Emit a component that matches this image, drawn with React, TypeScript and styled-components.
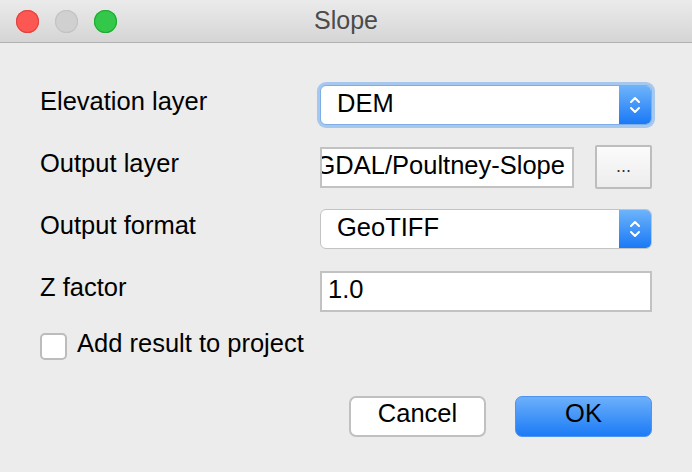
import React from "react";
import styled, { createGlobalStyle, css } from "styled-components";

const GlobalStyle = createGlobalStyle`
    html, body {
        margin: 0;
        padding: 0;
        background: #ececec;
    }
    body {
        font-family: "Liberation Sans", Arial, sans-serif;
        color: #000;
    }
`;

const Window = styled.div`
    width: 692px;
    height: 472px;
    background: #ececec;
    display: flex;
    flex-direction: column;
    overflow: hidden;
`;

const TitleBar = styled.div`
    height: 42px;
    flex: none;
    position: relative;
    display: flex;
    align-items: center;
    justify-content: center;
    background: linear-gradient(#ebebeb, #d5d5d5);
    border-bottom: 1px solid #b1b1b1;
`;

const Lights = styled.div`
    position: absolute;
    left: 16px;
    top: 10px;
    display: flex;
    gap: 16px;
`;

const Light = styled.span<{ $color: string; $edge: string }>`
    width: 23px;
    height: 23px;
    border-radius: 50%;
    background: ${({ $color }) => $color};
    box-shadow: inset 0 0 0 1px ${({ $edge }) => $edge};
`;

const Title = styled.div`
    font-size: 25px;
    color: #4b4b4b;
    padding-bottom: 2px;
`;

const Body = styled.div`
    padding: 31px 40px 0 40px;
    display: flex;
    flex-direction: column;
`;

const FormGrid = styled.div`
    display: grid;
    grid-template-columns: 280px 332px;
    grid-auto-rows: 62px;
    align-items: center;
`;

const Label = styled.div`
    font-size: 25.5px;
    padding-bottom: 7px;
`;

const Row = styled.div`
    display: flex;
    align-items: center;
    gap: 21px;
`;

const fieldBox = css`
    box-sizing: border-box;
    height: 41px;
    background: #fff;
    font-size: 25.5px;
    display: flex;
    align-items: center;
    overflow: hidden;
    white-space: nowrap;
`;

const FieldText = styled.span`
    padding-bottom: 3px;
`;

const SelectBox = styled.div<{ $focused?: boolean }>`
    ${fieldBox};
    height: 40px;
    width: 332px;
    border: 1px solid #c3c3c3;
    border-radius: 6px;
    padding-left: 16px;
    justify-content: space-between;
    ${({ $focused }) =>
        $focused &&
        css`
            border-color: #7eaee6;
            box-shadow: 0 0 0 3px #a6c8ef;
        `}
`;

const Stepper = styled.div`
    width: 32px;
    align-self: stretch;
    background: linear-gradient(#6db3fa, #1a79f6);
    display: flex;
    align-items: center;
    justify-content: center;
`;

const TextField = styled.div<{ $clip?: boolean }>`
    ${fieldBox};
    border: 2px solid #c2c2c2;
    padding: 0 6px;
    flex: 1;
    ${({ $clip }) =>
        $clip &&
        css`
            justify-content: flex-end;
            padding: 0 7px 0 0;
        `}
`;

const BrowseButton = styled.div`
    box-sizing: border-box;
    width: 57px;
    height: 44px;
    flex: none;
    border: 2px solid #bdbdbd;
    border-radius: 2px;
    background: linear-gradient(#fbfbfb, #ededed);
    display: flex;
    align-items: center;
    justify-content: center;
    font-size: 18px;
    color: #333;
    padding-bottom: 2px;
`;

const CheckRow = styled.label`
    height: 43px;
    display: flex;
    align-items: center;
    gap: 10px;
    font-size: 25.5px;
    padding-bottom: 4px;
`;

const CheckBox = styled.span`
    box-sizing: border-box;
    width: 27px;
    height: 27px;
    border: 2px solid #bcbcbc;
    border-radius: 5px;
    background: #fff;
    margin-top: 6px;
`;

const Buttons = styled.div`
    display: flex;
    justify-content: flex-end;
    gap: 29px;
    margin-top: 27px;
`;

const Button = styled.div<{ $primary?: boolean }>`
    box-sizing: border-box;
    width: 137px;
    height: 41px;
    border-radius: 7px;
    font-size: 25.5px;
    display: flex;
    align-items: center;
    justify-content: center;
    padding-bottom: 6px;
    ${({ $primary }) =>
        $primary
            ? css`
                  background: linear-gradient(#6cb0fb, #1c7bf6);
                  border: 1px solid #4d93f0;
              `
            : css`
                  background: #fff;
                  border: 2px solid #c0c0c0;
              `}
`;

const Chevrons = () => (
    <svg width="14" height="24" viewBox="0 0 14 24" fill="none" stroke="#fff" strokeWidth="2" strokeLinecap="round" strokeLinejoin="round">
        <path d="M3 9 L7 5 L11 9" />
        <path d="M3 15 L7 19 L11 15" />
    </svg>
);

export default function App() {
    return (
        <Window>
            <GlobalStyle />
            <TitleBar>
                <Lights>
                    <Light $color="#fc5753" $edge="#e0443e" />
                    <Light $color="#d0d0d0" $edge="#c2c2c2" />
                    <Light $color="#34c84a" $edge="#22a834" />
                </Lights>
                <Title>Slope</Title>
            </TitleBar>
            <Body>
                <FormGrid>
                    <Label>Elevation layer</Label>
                    <SelectBox $focused>
                        <FieldText>DEM</FieldText>
                        <Stepper><Chevrons /></Stepper>
                    </SelectBox>

                    <Label>Output layer</Label>
                    <Row>
                        <TextField $clip>
                            <FieldText>GDAL/Poultney-Slope</FieldText>
                        </TextField>
                        <BrowseButton>...</BrowseButton>
                    </Row>

                    <Label>Output format</Label>
                    <SelectBox>
                        <FieldText>GeoTIFF</FieldText>
                        <Stepper><Chevrons /></Stepper>
                    </SelectBox>

                    <Label>Z factor</Label>
                    <TextField>
                        <FieldText>1.0</FieldText>
                    </TextField>
                </FormGrid>
                <CheckRow>
                    <CheckBox />
                    Add result to project
                </CheckRow>
                <Buttons>
                    <Button>Cancel</Button>
                    <Button $primary>OK</Button>
                </Buttons>
            </Body>
        </Window>
    );
}
